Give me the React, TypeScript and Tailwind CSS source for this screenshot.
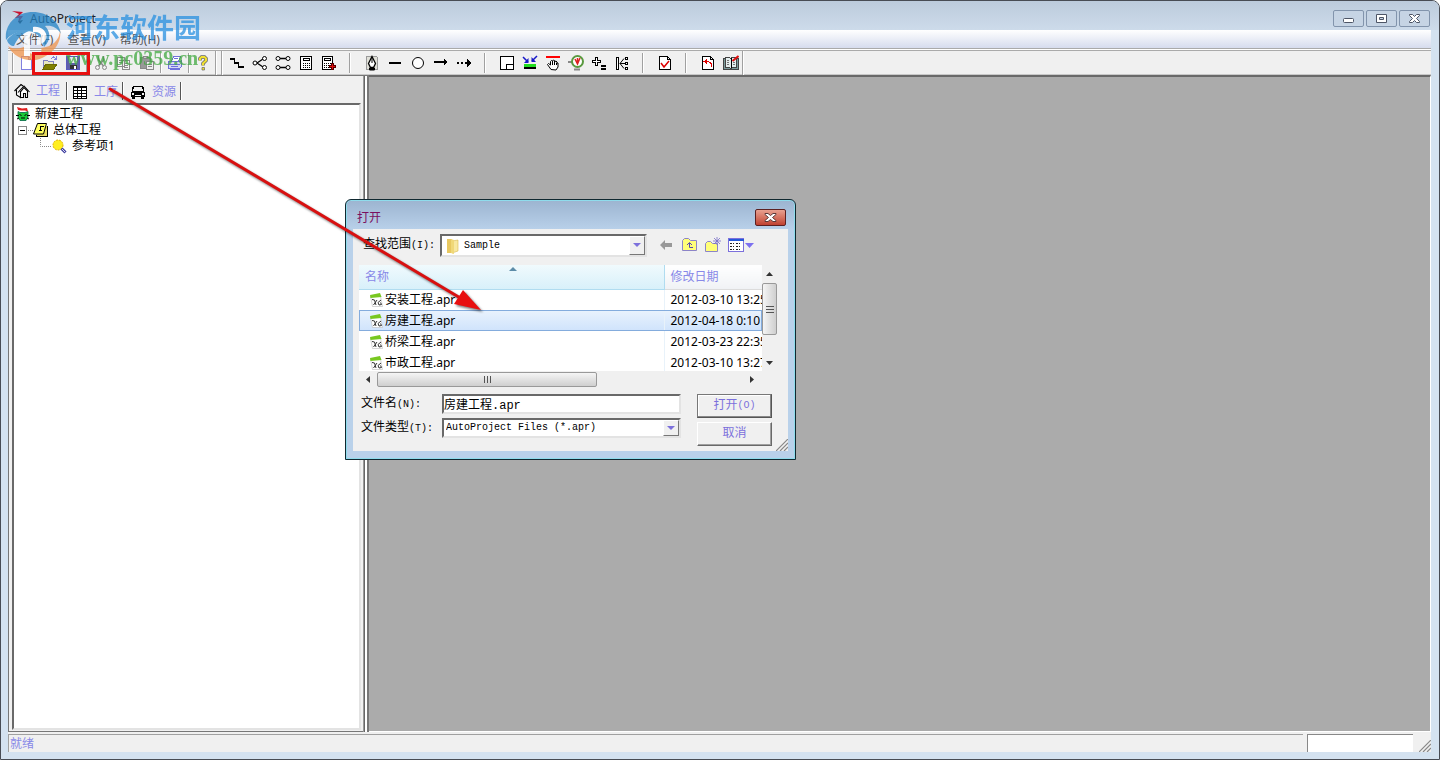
import type { ReactNode } from 'react'

const FILES = [
  { name: '安装工程.apr', date: '2012-03-10 13:25' },
  { name: '房建工程.apr', date: '2012-04-18 0:10', selected: true },
  { name: '桥梁工程.apr', date: '2012-03-23 22:35' },
  { name: '市政工程.apr', date: '2012-03-10 13:27' },
]

const MENUS = ['文件(F)', '查看(V)', '帮助(H)']

function Icon({ children }: { children: ReactNode }) {
  return (
    <svg width="16" height="16" viewBox="0 0 16 16" fill="none" stroke="#000" shapeRendering="crispEdges" aria-hidden="true">
      {children}
    </svg>
  )
}

const sheet = <path d="M2.5 1.5h8l3 3v10h-11z M10.5 1.5v3h3" fill="#fff" />

const ICONS: Record<string, ReactNode> = {
  新建: <path d="M2.5 1.5h7l3 3v10h-10z M9.5 1.5v3h3" fill="#fff" stroke="#8080e0" />,
  打开文件: (
    <>
      <path d="M1.5 13.5v-8h4l1 1h5v2" fill="#e8e8c0" stroke="#8080c0" />
      <path d="M1 14l3-5h11l-3 5z" fill="#808000" stroke="#6b6b00" />
      <path d="M9.5 3.5l2-1.5 2.5 2M14.5 1v3.5h-3" stroke="#8080e0" />
    </>
  ),
  保存: (
    <>
      <path d="M1.5 1.5h13v13h-13z" fill="#6060a8" stroke="#5a5ac0" />
      <path d="M4 2h8v6h-8z" fill="#e8e8f4" stroke="none" />
      <path d="M5 10h7v4h-7z" fill="#333" stroke="none" />
      <path d="M9 11h2v3h-2z" fill="#fff" stroke="none" />
    </>
  ),
  剪切: (
    <g shapeRendering="auto" stroke="#888">
      <path d="M5.500 1v4l5 6M10.500 1v4l-5 6" strokeWidth="1.500" />
      <circle cx="4.500" cy="12.500" r="2" />
      <circle cx="11.500" cy="12.500" r="2" />
    </g>
  ),
  复制: <path d="M1.5 2.5h7v9h-7zM6.5 5.5h7v9h-7zM3 5.5h3M3 7.5h3M8 8.5h4M8 10.5h4M8 12.5h4" fill="#f4f4f4" stroke="#8a8a8a" />,
  粘贴: (
    <>
      <path d="M1.5 2.5h10v11h-10z" fill="#999" stroke="#888" />
      <path d="M4.5 1.5h4v2h-4z" fill="#ccc" stroke="#888" />
      <path d="M7.5 6.5h7v8h-7zM9 9.5h4M9 11.5h4" fill="#eee" stroke="#888" />
    </>
  ),
  打印: (
    <>
      <path d="M4.5 6.5l2-5h7l-2 5" fill="#fff" stroke="#7070dc" />
      <path d="M1.5 6.5h12l1-1v6l-2 2h-11z" fill="#d8d8f4" stroke="#7070dc" />
      <path d="M2 9.5h11M4 11.5h7M7 3.5h4" stroke="#7070dc" />
      <path d="M3.5 13.5h9v1h-9z" fill="#fff" stroke="#7070dc" />
    </>
  ),
  帮助: (
    <g shapeRendering="auto">
      <path d="M5 5.500v-2l1.500-1.500h3l1.500 1.500v2l-3 3v2" stroke="#666" strokeWidth="3.500" />
      <path d="M5 5.500v-2l1.500-1.500h3l1.500 1.500v2l-3 3v2" stroke="#f0e030" strokeWidth="2" />
      <path d="M7 12.500h2.500v2.500h-2.500z" fill="#f0e030" stroke="#666" strokeWidth=".7" />
    </g>
  ),
  横道图: (
    <>
      <path d="M1 4h5M5 8h5M9 12h6" strokeWidth="2" />
      <path d="M5.5 4v3M9.5 8v3" />
    </>
  ),
  单代号: (
    <g shapeRendering="auto">
      <path d="M5 8l6-4M5 8l6 4" strokeWidth="1.300" />
      <circle cx="3" cy="8" r="2" fill="#fff" />
      <circle cx="12.500" cy="3.500" r="2" fill="#fff" />
      <circle cx="12.500" cy="12.500" r="2" fill="#fff" />
    </g>
  ),
  双代号: (
    <g shapeRendering="auto">
      <path d="M4 3.500h8M4 12.500h8" strokeWidth="1.500" />
      <circle cx="3" cy="3.500" r="2" fill="#fff" />
      <circle cx="13" cy="3.500" r="2" fill="#fff" />
      <circle cx="3" cy="12.500" r="2" fill="#fff" />
      <circle cx="13" cy="12.500" r="2" fill="#fff" />
    </g>
  ),
  计算: (
    <>
      <path d="M2.5 1.5h11v13h-11z" fill="#fff" />
      <path d="M5.5 3.5h6v2h-6z" />
      <path d="M5 8.5h7M5 10.5h7M5 12.5h7" strokeDasharray="1 1" />
    </>
  ),
  计算增加: (
    <>
      <path d="M1.5 1.5h10v13h-10z" fill="#fff" />
      <path d="M3.5 3.5h6v2h-6z" />
      <path d="M3 8.5h7M3 10.5h5M3 12.5h5" strokeDasharray="1 1" />
      <path d="M11.500 8v7M8 11.500h7" stroke="#500" strokeWidth="3" />
      <path d="M11.500 9v5M9 11.500h5" stroke="#e01010" />
    </>
  ),
  钢笔: (
    <>
      <path d="M2.5 1.5h10l1 1v12h-11z" fill="#e0e0d8" stroke="#999" />
      <g shapeRendering="auto">
        <path d="M8 1.500l3.500 7-2 4h-3l-2-4z" fill="#fff" strokeWidth="1.300" />
        <path d="M8 2v6M5.500 13h5v2h-5z" fill="#000" />
      </g>
    </>
  ),
  直线: <path d="M2 8h12" strokeWidth="2" />,
  圆: <circle cx="8" cy="8" r="5.5" fill="#fff" shapeRendering="auto" />,
  箭线: (
    <>
      <path d="M1 7h12" strokeWidth="2" />
      <path d="M11 4l4 3-4 3z" fill="#000" stroke="none" />
    </>
  ),
  虚箭线: (
    <>
      <path d="M1 8h10" strokeWidth="2" strokeDasharray="2 2" />
      <path d="M11 4l4 4-4 4z" fill="#000" stroke="none" />
    </>
  ),
  图框: (
    <>
      <path d="M1.5 1.5h13v13h-13z" fill="#fff" />
      <path d="M7.5 14v-4.5h7" />
    </>
  ),
  收缩: (
    <>
      <g shapeRendering="auto" stroke="#1818c8">
        <path d="M1 2l5 5M15 1l-5 5" strokeWidth="1.500" />
        <path d="M6.500 3v5H2zM9.500 2v5H14z" fill="#1818c8" stroke="none" />
      </g>
      <path d="M2 10.5h12" stroke="#2d2" strokeWidth="3" />
      <path d="M2 13h12" strokeWidth="2" />
    </>
  ),
  拖动: (
    <>
      <path d="M1 2h14" stroke="#f00" strokeWidth="2" />
      <path d="M6 14.500l-3.500-5 1-1L5.500 10V6.500l1-1 1 .5 1-1 1 .5.500 1 1-.5 1 1v1l1 0v4l-2 3z" fill="#fff" shapeRendering="auto" />
      <path d="M7.5 6v4M9.5 6v4M11.5 8v2" />
    </>
  ),
  时标: (
    <g shapeRendering="auto">
      <path d="M0 7h4M6 14.500h6" stroke="#888" strokeWidth="2" />
      <circle cx="9.500" cy="6.500" r="5.500" fill="#fff" stroke="#5a9a40" strokeWidth="2" />
      <path d="M7 4l2.500 5L12 3M9.500 3v5" stroke="#d22" strokeWidth="1.500" />
    </g>
  ),
  加等: (
    <>
      <path d="M4.5 2.5h2v3h3v2h-3v3h-2v-3h-3v-2h3z" fill="#fff" />
      <path d="M10 11h5M10 14h5" strokeWidth="2" />
    </>
  ),
  展开: (
    <>
      <path d="M2.5 2.5h2v12h-2zM6 8.5h6" fill="#fff" />
      <path d="M10 3.500L6 8.500l4 5" shapeRendering="auto" />
      <path d="M11.5 2.5h2v2h-2zM11.5 7.5h2v2h-2zM11.5 12.5h2v2h-2z" fill="#fff" />
    </>
  ),
  检查: (
    <>
      {sheet}
      <path d="M4 8l3 4 5-6" stroke="#d00" strokeWidth="1.5" shapeRendering="auto" />
    </>
  ),
  返回: (
    <>
      {sheet}
      <path d="M4 6.5h5l2 2v4" stroke="#d00" strokeDasharray="5 1" />
      <path d="M7 3.500v6L3.500 6.500z" fill="#d00" stroke="none" />
    </>
  ),
  书: (
    <>
      <path d="M.5 3.5h15v11H.5z" fill="#7b9b9b" stroke="#444" />
      <path d="M2.5 2.5h4l1.500 1 1-1h4v10h-4l-1 1-1.500-1h-4z" fill="#e4eeee" stroke="#444" />
      <path d="M8 3v10" />
      <path d="M4 5.5h2M4 7.5h2M4 9.5h2M10 7.5h2M10 9.5h2" stroke="#777" />
      <path d="M15.500 1L9.500 6" stroke="#e01010" strokeWidth="2" shapeRendering="auto" />
    </>
  ),
}

const TOOLS = [
  ['横道图', '单代号', '双代号', '计算', '计算增加'],
  ['钢笔', '直线', '圆', '箭线', '虚箭线'],
  ['图框', '收缩', '拖动', '时标', '加等', '展开'],
  ['检查'],
  ['返回', '书'],
]

function ToolButton({ name }: { name: string }) {
  return (
    <button type="button" aria-label={name} className="flex h-6 w-[23px] shrink-0 items-center justify-center">
      <Icon>{ICONS[name]}</Icon>
    </button>
  )
}

function Separator({ wide }: { wide?: boolean }) {
  return (
    <div className={wide ? 'flex w-5 shrink-0 justify-center' : 'flex w-[5px] shrink-0 justify-center'}>
      <div className="h-5 w-0.5 border-r border-white bg-[#a0a0a0]" />
    </div>
  )
}

function Toolbar() {
  return (
    <div className="flex h-6 shrink-0 items-center border-b border-[#c8c8c8] bg-[#f0f0f0] pl-1">
      <div className="mr-px h-5 w-0.5 border-r border-white bg-[#a0a0a0]" />
      {['新建', '打开文件', '保存'].map(n => <ToolButton key={n} name={n} />)}
      <Separator />
      {['剪切', '复制', '粘贴'].map(n => <ToolButton key={n} name={n} />)}
      <Separator />
      <ToolButton name="打印" />
      <Separator />
      <ToolButton name="帮助" />
      <div className="mr-1 ml-px h-6 w-0.5 border-r border-white bg-[#a0a0a0]" />
      <div className="mr-0.5 h-6 w-0.5 border-r border-white bg-[#a0a0a0]" />
      {TOOLS.map((group, i) => (
        <div key={group[0]} className="flex items-center">
          {i > 0 && <Separator wide />}
          {group.map(n => <ToolButton key={n} name={n} />)}
        </div>
      ))}
      <div className="h-6 w-0.5 border-r border-white bg-[#a0a0a0]" />
    </div>
  )
}

function TitleBar() {
  return (
    <div className="flex h-[29px] shrink-0 items-center bg-linear-to-b from-[#bccbdc] to-[#cddbea] pr-[9px] pl-[9px]">
      <svg width="16" height="16" viewBox="0 0 16 16" className="mt-1" aria-hidden="true">
        <path d="M2 1l11 1-4 4h4l-5 7 1-5H5l4-4z" fill="#c8102e" />
        <path d="M8 11l5-1-3 4z" fill="#333" />
      </svg>
      <h1 className="mt-1.5 ml-1 flex-1 text-xs text-[#222]">AutoProject</h1>
      <div className="mt-1.5 flex gap-0.5">
        <CaptionButton label="最小化">
          <rect x="3.5" y="7.5" width="10" height="4" rx="1" />
        </CaptionButton>
        <CaptionButton label="最大化">
          <path d="M3.5 3.5h10v8h-10zM6.5 6.5h4v2h-4z" fillRule="evenodd" />
        </CaptionButton>
        <CaptionButton label="关闭">
          <path d="M3.500 3.500h3l2 2 2-2h3v1L10.500 7.500l3 3v1h-3l-2-2-2 2h-3v-1l3-3-3-3z" />
        </CaptionButton>
      </div>
    </div>
  )
}

function CaptionButton({ label, children }: { label: string; children: ReactNode }) {
  return (
    <button
      type="button"
      aria-label={label}
      className="flex h-[17px] w-[31px] items-center justify-center rounded-xs border border-[#8294ac] bg-[#c6d4e4]"
    >
      <svg width="17" height="15" viewBox="0 0 17 15" fill="#fff" stroke="#4d5566" aria-hidden="true">
        {children}
      </svg>
    </button>
  )
}

function TabDivider() {
  return <div className="h-[18px] w-0.5 border-r border-white bg-[#555]" />
}

function ProjectPanel() {
  return (
    <aside className="flex w-[355px] shrink-0 flex-col border-t border-b border-l border-[#777] bg-[#f0f0f0] pr-0.5 pb-px pl-[3px]">
      <div role="tablist" className="flex h-[27px] items-center pt-0.5 text-xs text-[#8888e8]">
        <button type="button" role="tab" aria-selected="true" className="flex items-center gap-1.5 pr-1.5 pl-0.5">
          <svg width="16" height="16" viewBox="0 0 16 16" fill="#fff" stroke="#000" strokeWidth="1.100" aria-hidden="true">
            <path d="M2.500 7v5l4 2.500V8" />
            <path d="M.5 8L7 1.500l2 1.500" fill="none" />
            <path d="M6.500 9v5.500h3v-4h2v4h2V8L10 4.500z" />
            <path d="M4 9.500L10 3l5.500 6" fill="none" />
          </svg>
          工程
        </button>
        <TabDivider />
        <button type="button" role="tab" aria-selected="false" className="flex items-center gap-1.5 pt-0.5 pr-1 pl-1">
          <svg width="16" height="16" viewBox="0 0 16 16" fill="#fff" stroke="#000" shapeRendering="crispEdges" aria-hidden="true">
            <path d="M1.5 2.5h13v12h-13zM1 3.5h14M1 6.5h14M1 9.5h14M1 12.5h14M5.5 3v12M9.5 3v12" />
          </svg>
          工序
        </button>
        <TabDivider />
        <button type="button" role="tab" aria-selected="false" className="flex items-center gap-1.5 pt-0.5 pr-1 pl-1.5">
          <svg width="16" height="16" viewBox="0 0 16 16" shapeRendering="crispEdges" aria-hidden="true">
            <path d="M3 2h10v1h1v5h1v5h-1v2h-3v-2H5v2H2v-2H1V8h1V3h1z" fill="#000" />
            <path d="M4 3h8l1 4H3zM2 9h2v2H2zM12 9h2v2h-2zM5 11h6v1H5z" fill="#f0f0f0" />
          </svg>
          资源
        </button>
        <TabDivider />
      </div>
      <div className="min-h-0 flex-1 border-2 border-t-[#696969] border-r-[#e3e3e3] border-b-[#e3e3e3] border-l-[#696969] bg-white pt-px text-xs text-black">
        <ul role="tree" aria-label="工程">
          <li role="treeitem" className="flex h-4 items-center gap-1 pl-px">
            <svg width="16" height="16" viewBox="0 0 16 16" aria-hidden="true">
              <path d="M3 5.500l2 1h5l3-1v6l-2 3H5l-2-3z" fill="#18c838" stroke="#064" strokeWidth=".8" />
              <path d="M2 1l5 1.500L12 2l1 3.500-3-1H6L3 4z" fill="#e02020" />
              <path d="M4.500 8.500l2 1M11.500 8.500l-2 1M6 12h4M1 9.500h3M12 9.500h3M2 13l2-1M14 13l-2-1" stroke="#000" />
            </svg>
            新建工程
          </li>
          <li role="treeitem" aria-expanded="true" className="flex h-4 items-center pl-1">
            <svg width="32" height="16" viewBox="0 0 32 16" fill="none" shapeRendering="crispEdges" aria-hidden="true">
              <path d="M.5 4.5h8v8h-8z" fill="#fff" stroke="#888" />
              <path d="M2 8.5h5" stroke="#000" />
              <path d="M10 8.5h6" stroke="#888" strokeDasharray="1 1" />
              <path d="M29.5 3.5v11h-11v-2" fill="#e8dc60" stroke="#000" />
              <path d="M19.500 1.500h9l-3 10.500h-10z" fill="#ffff60" stroke="#000" shapeRendering="auto" />
              <path d="M22 4.5h4M21 8.500h3M22.5 4v4" stroke="#000" />
            </svg>
            <span className="ml-[3px]">总体工程</span>
          </li>
          <li role="treeitem" className="flex h-4 items-center pl-[26px]">
            <svg width="28" height="16" viewBox="0 0 28 16" aria-hidden="true">
              <path d="M.5 0v8.5H12" fill="none" stroke="#888" strokeDasharray="1 1" />
              <circle cx="18" cy="7" r="5" fill="#ffee20" stroke="#e0b000" strokeDasharray="2 1" />
              <path d="M21.500 10.500l4 4" stroke="#4040a0" strokeWidth="3" />
              <path d="M22 11l3 3" stroke="#d8d8f0" />
            </svg>
            <span className="ml-1">参考项1</span>
          </li>
        </ul>
      </div>
    </aside>
  )
}

function DropArrow() {
  return (
    <span className="pointer-events-none flex w-4 shrink-0 items-center justify-center border border-t-white border-r-[#777] border-b-[#777] border-l-white bg-[#f0f0f0]">
      <svg width="8" height="4" viewBox="0 0 8 4" aria-hidden="true">
        <path d="M0 0h8L4 4z" fill="#7c70dc" />
      </svg>
    </span>
  )
}

function FileIcon() {
  return (
    <svg width="14" height="14" viewBox="0 0 14 14" className="shrink-0" aria-hidden="true">
      <path d="M1.500 3h10l2 10.500h-10z" fill="#fff" stroke="#bbb" strokeWidth=".6" />
      <path d="M1 2l10-2 1.500 4-11 1z" fill="#78c820" />
      <path d="M3 6.500l2.500.5 1.500 5M8 7l-3.500 5M12 7L9 9.500l1 2.500 2.500-.5-1-2" fill="none" stroke="#333" />
    </svg>
  )
}

function LookInTools() {
  return (
    <div className="ml-3 flex items-center">
      <button type="button" aria-label="后退" className="flex w-[23px] items-center">
        <svg width="14" height="12" viewBox="0 0 14 12" aria-hidden="true">
          <path d="M1 6l5-5v3h7v4H6v3z" fill="#999" />
        </svg>
      </button>
      <button type="button" aria-label="上一级" className="flex w-[23px] items-center">
        <svg width="16" height="14" viewBox="0 0 16 14" fill="#ffff78" stroke="#8c84c8" aria-hidden="true">
          <path d="M.5 12.500V2.500l2-2h4l2 2h6v10z" />
          <path d="M11 9.500H7.500V5M5 7l2.500-2.500L10 7" fill="none" stroke="#554ab0" />
        </svg>
      </button>
      <button type="button" aria-label="新建文件夹" className="flex w-[23px] items-center">
        <svg width="17" height="16" viewBox="0 0 17 16" fill="#ffff78" stroke="#8c84c8" aria-hidden="true">
          <path d="M.5 14.500V6.500l2-2h3l2 2h5v8z" />
          <path d="M12 0v8M8 4h8M9 1l6 6M15 1L9 7" stroke="#776cc8" strokeWidth=".8" />
        </svg>
      </button>
      <button type="button" aria-label="查看方式" className="flex items-center">
        <svg width="17" height="14" viewBox="0 0 17 14" shapeRendering="crispEdges" aria-hidden="true">
          <path d="M.5 .5h15v13H.5z" fill="#fff" stroke="#7c70dc" />
          <path d="M1 1h15v2H1z" fill="#2458d8" />
          <path d="M2 5h2v1H2zM5 5h1v1H5zM8 5h2v1H8zM11 5h1v1h-1zM2 8h2v1H2zM5 8h1v1H5zM8 8h2v1H8zM11 8h1v1h-1zM2 11h2v1H2zM5 11h1v1H5zM8 11h2v1H8zM11 11h1v1h-1z" fill="#222" />
        </svg>
        <svg width="9" height="5" viewBox="0 0 9 5" aria-hidden="true">
          <path d="M0 0h9L4.500 5z" fill="#7c70f0" />
        </svg>
      </button>
    </div>
  )
}

function FileList() {
  return (
    <div className="ml-1.5 flex">
      <div className="w-[403px]">
        <div className="h-[106px] overflow-hidden bg-white">
          <table className="w-full table-fixed border-collapse text-xs text-black">
            <thead>
              <tr className="h-6 text-left text-[#8888e8]">
                <th className="w-[305px] border-r border-b border-[#b0dcf0] bg-linear-to-b from-[#f0fafd] to-[#d8f0fa] p-0 pl-1.5 font-normal">
                  <div className="relative">
                    名称
                    <svg width="8" height="4" viewBox="0 0 8 4" className="absolute -top-0.5 left-[144px]" aria-hidden="true">
                      <path d="M4 0l4 4H0z" fill="#5c8ca8" />
                    </svg>
                  </div>
                </th>
                <th className="border-b border-[#dcdcdc] bg-linear-to-b from-white to-[#f0f2f5] p-0 pl-1.5 font-normal">修改日期</th>
              </tr>
            </thead>
            <tbody>
              {FILES.map(file => (
                <tr
                  key={file.name}
                  className={
                    file.selected
                      ? 'h-[21px] bg-linear-to-b from-[#eaf3fd] to-[#cfe3fc] outline -outline-offset-1 outline-[#84acdd]'
                      : 'h-[21px]'
                  }
                >
                  <td className="border-r border-[#e8f2fa] p-0 pl-2.5">
                    <div className="flex items-center gap-0.5">
                      <FileIcon />
                      <span>{file.name}</span>
                    </div>
                  </td>
                  <td className="overflow-hidden p-0 pl-1.5 whitespace-nowrap">{file.date}</td>
                </tr>
              ))}
            </tbody>
          </table>
        </div>
        <div className="flex h-[17px] items-center bg-[#f0f0f0]">
          <span className="flex w-[18px] justify-center">
            <svg width="4" height="7" viewBox="0 0 4 7" aria-hidden="true"><path d="M4 0v7L0 3.500z" fill="#333" /></svg>
          </span>
          <span className="flex h-[15px] w-[220px] items-center justify-center gap-0.5 rounded-xs border border-[#999] bg-linear-to-b from-[#f5f5f5] to-[#cfcfcf]">
            <i className="h-[7px] w-px bg-[#555]" />
            <i className="h-[7px] w-px bg-[#555]" />
            <i className="h-[7px] w-px bg-[#555]" />
          </span>
          <span className="flex flex-1 justify-end pr-2">
            <svg width="4" height="7" viewBox="0 0 4 7" aria-hidden="true"><path d="M0 0v7l4-3.500z" fill="#333" /></svg>
          </span>
        </div>
      </div>
      <div className="flex h-[106px] w-[15px] flex-col items-center bg-[#f0f0f0]">
        <span className="flex h-[18px] items-center">
          <svg width="7" height="4" viewBox="0 0 7 4" aria-hidden="true"><path d="M0 4h7L3.500 0z" fill="#333" /></svg>
        </span>
        <span className="flex h-[52px] w-[15px] flex-col items-center justify-center gap-0.5 rounded-xs border border-[#999] bg-linear-to-r from-[#f5f5f5] to-[#cfcfcf]">
          <i className="h-px w-2 bg-[#555]" />
          <i className="h-px w-2 bg-[#555]" />
          <i className="h-px w-2 bg-[#555]" />
        </span>
        <span className="flex flex-1 items-end pb-1.5">
          <svg width="7" height="4" viewBox="0 0 7 4" aria-hidden="true"><path d="M0 0h7L3.500 4z" fill="#333" /></svg>
        </span>
      </div>
    </div>
  )
}

function Key({ children }: { children: string }) {
  return <span className="text-[10px]">{children}</span>
}

const sunken = 'border-2 border-t-[#696969] border-r-[#e3e3e3] border-b-[#e3e3e3] border-l-[#696969] bg-white'
const song = 'font-["Liberation_Mono","Noto_Sans_CJK_SC",monospace]'

function OpenDialog() {
  return (
    <div
      role="dialog"
      aria-labelledby="open-title"
      className="absolute top-[198px] left-[344px] w-[451px] rounded-t-md border border-[#102830] bg-[#b9d1ea] bg-linear-to-b from-[#9cb4d0] to-[#b9d1ea] to-[30px] px-[7px] pb-2 shadow-[inset_0_0_0_1px_#8fdcec]"
    >
      <div className="flex h-[29px] items-center justify-between pr-0.5 pl-1">
        <h2 id="open-title" className="mt-1.5 text-xs text-[#7a1060]">打开</h2>
        <button
          type="button"
          aria-label="关闭"
          className="mt-1.5 flex h-[17px] w-[31px] items-center justify-center rounded-xs border border-[#5c2020] bg-linear-to-b from-[#e8a090] to-[#c04030]"
        >
          <svg width="13" height="11" viewBox="0 0 13 11" fill="#fff" stroke="#5a3a3a" aria-hidden="true">
            <path d="M1 1.500h3l2.500 2 2.500-2h3v1L8.500 5.500l3.500 3v1H9l-2.500-2-2.500 2H1v-1l3.500-3L1 2.500z" />
          </svg>
        </button>
      </div>
      <div className="bg-[#f0f0f0] text-black">
        <div className="mb-1 flex h-8 items-center pl-2.5">
          <label htmlFor="look-in" className={`${song} w-[77px] text-xs`}>
            查找范围<Key>(I):</Key>
          </label>
          <div className={`${sunken} flex h-[23px] w-[207px] pl-1`}>
            <svg width="14" height="16" viewBox="0 0 14 16" className="mt-0.5 mr-1 shrink-0" aria-hidden="true">
              <path d="M1 1h5v14H1z" fill="#e8c860" />
              <path d="M6 3l6-1v11l-6 2z" fill="#f8e8a0" stroke="#d8b850" strokeWidth=".6" />
              <path d="M5 1l3 1v14l-3-1z" fill="#f0d878" />
            </svg>
            <select id="look-in" className={`${song} min-w-0 flex-1 appearance-none bg-transparent text-[10px] text-black outline-none`}>
              <option>Sample</option>
            </select>
            <DropArrow />
          </div>
          <LookInTools />
        </div>
        <FileList />
        <div className="flex justify-between pt-1.5 pl-2">
          <div className={`${song} flex flex-col gap-1 text-xs`}>
            <div className="flex items-center">
              <label htmlFor="file-name" className="w-[81px]">
                文件名<Key>(N):</Key>
              </label>
              <input id="file-name" defaultValue="房建工程.apr" className={`${sunken} h-5 w-[239px] text-xs outline-none`} />
            </div>
            <div className="flex items-center">
              <label htmlFor="file-type" className="w-[81px]">
                文件类型<Key>(T):</Key>
              </label>
              <div className={`${sunken} flex h-5 w-[239px] pl-0.5`}>
                <select id="file-type" className="min-w-0 flex-1 appearance-none bg-transparent text-[10px] text-black outline-none">
                  <option>AutoProject Files (*.apr)</option>
                </select>
                <DropArrow />
              </div>
            </div>
          </div>
          <div className={`${song} mr-4 flex flex-col gap-1 text-xs text-[#7c70dc]`}>
            <button
              type="button"
              className="flex h-6 w-[75px] items-center justify-center border border-t-[#777] border-r-[#555] border-b-[#555] border-l-[#777] bg-[#f0f0f0] shadow-[inset_-1px_-1px_#888,inset_1px_1px_#fff]"
            >
              打开<Key>(O)</Key>
            </button>
            <button
              type="button"
              className="flex h-6 w-[75px] items-center justify-center border border-t-white border-r-[#696969] border-b-[#696969] border-l-white bg-[#f0f0f0] shadow-[inset_-1px_-1px_#a0a0a0]"
            >
              取消
            </button>
          </div>
        </div>
        <div className="-mt-[7px] flex justify-end">
          <ResizeGrip />
        </div>
      </div>
    </div>
  )
}

function ResizeGrip() {
  return (
    <svg width="12" height="12" viewBox="0 0 12 12" stroke="#888" strokeWidth="1.200" aria-hidden="true">
      <path d="M0 12L12 0M4 12l8-8M8 12l4-4" />
    </svg>
  )
}

function Watermark() {
  return (
    <div className="pointer-events-none absolute top-[9px] left-1 flex opacity-75">
      <svg width="58" height="58" viewBox="0 0 58 58" aria-hidden="true">
        <path d="M1 30C-1 14 12 2 28 2c14 0 26 9 28 22-4-7-10-9-16-8 6 6 6 14-1 21-3-12-9-16-18-16C12 21 5 25 1 30z" fill="#2484c6" />
        <path d="M3 36c6 12 22 18 34 12 12-5 20-16 18-28 0 10-8 17-19 18 2 4-2 8-8 6-4 0-6-4-5-9-7 4-14 5-20 1z" fill="#f0944c" />
        <path d="M19 24h6v22h-6zM28 17c14-2 20 16 4 18v-6c7-1 5-8-4-7z" fill="#fff" />
        <path d="M2 30c6-8 14-11 22-9-8 3-12 8-15 15-3 0-6-2-7-6z" fill="#2484c6" />
      </svg>
      <div className="flex flex-col pl-[3px] whitespace-nowrap">
        <span className="text-[27px] leading-9 font-bold text-[#2890e0]">河东软件园</span>
        <span className="font-['Liberation_Serif',serif] text-xl leading-6 font-bold text-[#3fa83f]">www.pc0359.cn</span>
      </div>
    </div>
  )
}

function Annotations() {
  return (
    <svg width="520" height="330" viewBox="1 1 520 330" className="pointer-events-none absolute top-0 left-0" aria-hidden="true">
      <rect x="33.5" y="53.5" width="55" height="20" fill="none" stroke="#e81010" strokeWidth="3" />
      <g className="drop-shadow-[2px_2px_1px_rgba(0,0,0,0.5)]">
        <path d="M110 89L462 299" stroke="#d81010" strokeWidth="3" strokeLinecap="round" />
        <path d="M481 310L454 304L463 290z" fill="#e81010" />
      </g>
    </svg>
  )
}

export default function App() {
  return (
    <div className="relative flex h-screen flex-col overflow-hidden rounded-t-lg border border-[#484c54] bg-[#d4e2f0] pb-[7px] font-['Noto_Sans','Noto_Sans_CJK_SC',sans-serif]">
      <TitleBar />
      <div className="mr-2 ml-[7px] flex min-h-0 flex-1 flex-col">
        <nav className="flex h-[18px] shrink-0 items-center gap-3.5 bg-linear-to-b from-white to-[#d6dcee] pt-0.5 pl-2 text-xs text-[#555]">
          {MENUS.map(menu => <button type="button" key={menu}>{menu}</button>)}
        </nav>
        <div className="h-[3px] shrink-0 border-y border-[#aaa] bg-white" />
        <Toolbar />
        <main className="flex min-h-0 flex-1 bg-[#f0f0f0]">
          <ProjectPanel />
          <div className="flex w-1.5 shrink-0 border-t border-[#777] bg-white">
            <div className="w-0.5 border-r border-[#666] bg-[#999]" />
            <div className="w-1 border-r-2 border-[#777]" />
          </div>
          <section aria-label="工作区" className="flex-1 border-t-2 border-r border-b border-t-[#696969] border-r-white border-b-white bg-[#ababab]" />
        </main>
        <footer className="flex h-5 shrink-0 items-stretch bg-[#f0f0f0] pt-0.5 text-xs text-[#8888e8]">
          <div className="flex flex-1 items-center border-t border-l border-[#a0a0a0] pl-px">就绪</div>
          <div className="ml-1 w-[106px] border-t border-l border-[#888] bg-white" />
          <div className="flex w-[18px] items-end justify-end">
            <ResizeGrip />
          </div>
        </footer>
      </div>
      <OpenDialog />
      <Watermark />
      <Annotations />
    </div>
  )
}
